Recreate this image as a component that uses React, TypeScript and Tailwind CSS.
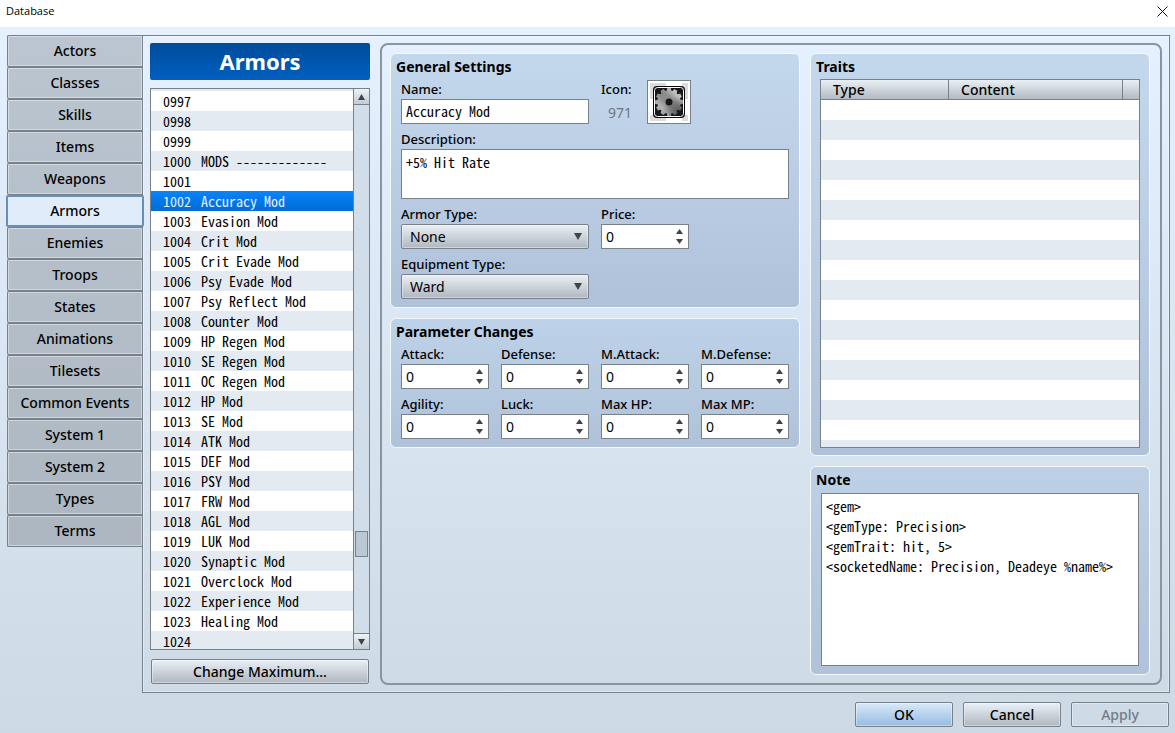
import React, { useState } from 'react';
import type { ReactNode } from 'react';

const tabs = [
  'Actors', 'Classes', 'Skills', 'Items', 'Weapons', 'Armors', 'Enemies', 'Troops',
  'States', 'Animations', 'Tilesets', 'Common Events', 'System 1', 'System 2', 'Types', 'Terms',
];

const armors = [
  { id: '0997', name: '' },
  { id: '0998', name: '' },
  { id: '0999', name: '' },
  { id: '1000', name: 'MODS -------------' },
  { id: '1001', name: '' },
  { id: '1002', name: 'Accuracy Mod' },
  { id: '1003', name: 'Evasion Mod' },
  { id: '1004', name: 'Crit Mod' },
  { id: '1005', name: 'Crit Evade Mod' },
  { id: '1006', name: 'Psy Evade Mod' },
  { id: '1007', name: 'Psy Reflect Mod' },
  { id: '1008', name: 'Counter Mod' },
  { id: '1009', name: 'HP Regen Mod' },
  { id: '1010', name: 'SE Regen Mod' },
  { id: '1011', name: 'OC Regen Mod' },
  { id: '1012', name: 'HP Mod' },
  { id: '1013', name: 'SE Mod' },
  { id: '1014', name: 'ATK Mod' },
  { id: '1015', name: 'DEF Mod' },
  { id: '1016', name: 'PSY Mod' },
  { id: '1017', name: 'FRW Mod' },
  { id: '1018', name: 'AGL Mod' },
  { id: '1019', name: 'LUK Mod' },
  { id: '1020', name: 'Synaptic Mod' },
  { id: '1021', name: 'Overclock Mod' },
  { id: '1022', name: 'Experience Mod' },
  { id: '1023', name: 'Healing Mod' },
  { id: '1024', name: '' },
];

const params = ['Attack', 'Defense', 'M.Attack', 'M.Defense', 'Agility', 'Luck', 'Max HP', 'Max MP'];

const note = `<gem>
<gemType: Precision>
<gemTrait: hit, 5>
<socketedName: Precision, Deadeye %name%>`;

const mono = "font-['Noto_Sans_Mono_CJK_JP','Liberation_Mono',monospace]";

function Arrow({ down = false, className = '' }: { down?: boolean; className?: string }) {
  return (
    <svg viewBox="0 0 8 7" preserveAspectRatio="none" className={className} fill="#3f4449" aria-hidden="true">
      <path d={down ? 'M0 0h8L4 7z' : 'M0 7h8L4 0z'} />
    </svg>
  );
}

function Group({ title, className = '', children }: { title: string; className?: string; children: ReactNode }) {
  return (
    <section className={`flex flex-col rounded-md border border-[#f4f9ff] bg-linear-to-b to-[#afc2d9] ${className}`}>
      <h2 className="h-[25px] pl-[5px] text-sm leading-[26px] font-bold">{title}</h2>
      {children}
    </section>
  );
}

function Label({ htmlFor, children }: { htmlFor: string; children: ReactNode }) {
  return (
    <label htmlFor={htmlFor} className="block h-5 text-[13px] leading-5 font-medium whitespace-nowrap">
      {children}
    </label>
  );
}

function NumberField({ id, label }: { id: string; label: string }) {
  const [value, setValue] = useState(0);

  return (
    <div>
      <Label htmlFor={id}>{label}:</Label>
      <div className="flex h-[25px] border border-[#788088] bg-white">
        <input
          id={id}
          type="number"
          value={value}
          onChange={(e) => setValue(Number(e.target.value))}
          className="w-0 flex-1 [appearance:textfield] pl-1 text-sm outline-none [&::-webkit-inner-spin-button]:appearance-none"
        />
        <div className="flex w-3 flex-col justify-center gap-[5px]">
          <button type="button" aria-label={`${label} up`} onClick={() => setValue(value + 1)}>
            <Arrow className="h-[5px] w-[7px]" />
          </button>
          <button type="button" aria-label={`${label} down`} onClick={() => setValue(Math.max(0, value - 1))}>
            <Arrow down className="h-[5px] w-[7px]" />
          </button>
        </div>
      </div>
    </div>
  );
}

function SelectField({ id, label, options }: { id: string; label: string; options: string[] }) {
  return (
    <div className="col-span-2">
      <Label htmlFor={id}>{label}:</Label>
      <div className="relative">
        <select
          id={id}
          className="block h-[25px] w-full appearance-none rounded-xs border border-[#788088] bg-linear-to-b from-[#e9f0f5] to-[#b0b7c0] pl-2 text-sm inset-shadow-[0_0_0_1px_#ffffff66] outline-none"
        >
          {options.map((o) => (
            <option key={o}>{o}</option>
          ))}
        </select>
        <Arrow down className="pointer-events-none absolute top-[9px] right-[7px] h-[7px] w-2" />
      </div>
    </div>
  );
}

// twelve-tooth cog around (21, 21)
const gearPath =
  Array.from({ length: 12 }, (_, i) =>
    [[-12, 11.5], [-7, 14], [7, 14], [12, 11.5]]
      .map(([deg, r]) => {
        const a = ((i * 30 + deg) * Math.PI) / 180;
        return `${(21 + r * Math.sin(a)).toFixed(2)} ${(21 - r * Math.cos(a)).toFixed(2)}`;
      })
      .join('L')
  ).reduce((d, tooth, i) => d + (i ? 'L' : 'M') + tooth, '') + 'Z';

function GearIcon() {
  return (
    <svg viewBox="0 0 42 42" className="size-[42px]" aria-hidden="true">
      <defs>
        <linearGradient id="steel" x1="0" y1="1" x2="1" y2="0">
          <stop offset="0" stopColor="#7c7c7c" />
          <stop offset="0.25" stopColor="#b4b4b4" />
          <stop offset="0.45" stopColor="#8a8a8a" />
          <stop offset="0.6" stopColor="#8e8e8e" />
          <stop offset="0.78" stopColor="#c4c4c4" />
          <stop offset="1" stopColor="#858585" />
        </linearGradient>
        <radialGradient id="shade" cx="0.85" cy="0.9" r="0.6">
          <stop offset="0" stopColor="#333" stopOpacity="0.6" />
          <stop offset="1" stopColor="#333" stopOpacity="0" />
        </radialGradient>
      </defs>
      <path d="M2 2h16v16H2zM34 2h6v16h-6zM2 34h16v6H2zM34 34h6v6h-6z" fill="#dcdcdc" />
      <rect x="5" y="5" width="32" height="32" rx="4" fill="#0c0c0e" />
      <rect x="6.5" y="6.5" width="29" height="29" rx="3" fill="#17171a" stroke="#fff" />
      <path d={gearPath} fill="url(#steel)" />
      <path d={gearPath} fill="url(#shade)" />
      <circle cx="21" cy="21" r="3.5" fill="#17171a" />
    </svg>
  );
}

const buttonBase = 'h-[25px] rounded-xs border border-[#788088] text-sm font-medium inset-shadow-[0_0_0_1px_#ffffff66]';

function App() {
  const [tab, setTab] = useState('Armors');
  const [selected, setSelected] = useState('1002');

  return (
    <div className="flex h-screen min-h-[620px] min-w-[960px] flex-col bg-white font-['Noto_Sans','Noto_Sans_CJK_JP',sans-serif] text-black">
      <header className="flex h-[27px] shrink-0 items-center justify-between pr-[7px] pb-1 pl-1.5 font-['Open_Sans',sans-serif] text-[11px]">
        <h1>Database</h1>
        <button type="button" aria-label="Close">
          <svg viewBox="0 0 11 11" className="size-[11px]" stroke="#111" fill="none">
            <path d="M.5.5l10 10M10.5.5l-10 10" />
          </svg>
        </button>
      </header>

      <div className="flex min-h-0 flex-1 flex-col bg-linear-to-b from-[#e5f1ff] to-[#cdd9e4] pt-2 pr-[5px] pb-1.5 pl-[7px]">
        <div className="flex min-h-0 flex-1">
          {/* Section tabs */}
          <nav className="flex w-[135px] shrink-0 flex-col">
            {tabs.map((t) => (
              <button
                key={t}
                type="button"
                onClick={() => setTab(t)}
                className={
                  t === tab
                    ? 'z-10 -mr-[2px] -ml-px h-8 rounded-xs border-2 border-[#6a8fb7] bg-[#e1ecfa] text-sm font-medium'
                    : 'h-8 rounded-l-xs border border-r-0 border-[#788088] bg-black/18 text-sm font-medium inset-shadow-[0_0_0_1px_#ffffff66]'
                }
              >
                {t}
              </button>
            ))}
          </nav>

          <main className="flex min-w-0 flex-1 gap-2.5 border border-[#788088] p-[7px] inset-shadow-[0_0_0_1px_#ffffff66]">
            {/* Armor list */}
            <div className="flex w-[220px] shrink-0 flex-col pb-px">
              <h2 className="h-[37px] shrink-0 rounded-xs bg-linear-to-b from-[#004c9b] to-[#005fc0] text-center text-[22px] leading-9 font-bold text-white">
                Armors
              </h2>
              <div className="mt-2 flex min-h-0 flex-1 border border-[#788088] bg-white">
                <ul className={`min-w-0 flex-1 overflow-hidden border-t-2 border-[#e3eaf1] text-sm ${mono}`}>
                  {armors.map((a) => (
                    <li key={a.id} className="h-5 even:bg-[#e3eaf1]">
                      <button
                        type="button"
                        onClick={() => setSelected(a.id)}
                        className={
                          a.id === selected
                            ? 'flex h-5 w-full gap-2.5 bg-linear-to-b from-[#0a83fb] to-[#006cd6] pl-3 text-left leading-5 whitespace-pre text-[#e6f2ff]'
                            : 'flex h-5 w-full gap-2.5 pl-3 text-left leading-5 whitespace-pre'
                        }
                      >
                        <span>{a.id}</span>
                        <span>{a.name}</span>
                      </button>
                    </li>
                  ))}
                </ul>
                <div className="flex w-4 flex-col border-l border-[#788088] bg-[#d1dde8]">
                  <button type="button" aria-label="Scroll up" className="flex h-4 items-center justify-center border-b border-[#788088] bg-linear-to-b from-[#eef3f7] to-[#c3cbd3]">
                    <Arrow className="h-[6px] w-[7px]" />
                  </button>
                  <div className="grow-[426]" />
                  <div className="mx-px h-[26px] border border-[#788088] bg-[#bcc7d4]" />
                  <div className="grow-[76]" />
                  <button type="button" aria-label="Scroll down" className="flex h-4 items-center justify-center border-t border-[#788088] bg-linear-to-b from-[#eef3f7] to-[#c3cbd3]">
                    <Arrow down className="h-[6px] w-[7px]" />
                  </button>
                </div>
              </div>
              <button type="button" className={`mx-px mt-[9px] shrink-0 bg-linear-to-b from-[#e9f0f7] to-[#b0b7c0] ${buttonBase}`}>
                Change Maximum...
              </button>
            </div>

            {/* Editor panel */}
            <div className="grid min-w-0 flex-1 grid-cols-[minmax(0,41fr)_minmax(0,34fr)] gap-2.5 rounded-lg border-2 border-[#8b949f] py-2 pr-2.5 pl-2">
              <div className="flex flex-col gap-2.5">
                <Group title="General Settings" className="from-[#c3d8ec] via-[#bbcde4]">
                  <div className="grid grid-cols-4 gap-x-3 gap-y-[5px] px-2.5 pb-2">
                    <div className="col-span-2">
                      <Label htmlFor="name">Name:</Label>
                      <input
                        id="name"
                        defaultValue="Accuracy Mod"
                        className={`block h-[25px] w-full border border-[#788088] bg-white px-1 pb-0.5 text-sm outline-none ${mono}`}
                      />
                    </div>
                    <div className="col-span-2 flex h-[45px]">
                      <div className="w-[46px]">
                        <Label htmlFor="icon">Icon:</Label>
                        <output htmlFor="icon" className="block pl-[7px] text-sm leading-7 text-[#6e7783]">971</output>
                      </div>
                      <button id="icon" type="button" aria-label="Icon" className="mt-px size-11 border border-[#788088] bg-white">
                        <GearIcon />
                      </button>
                    </div>
                    <div className="col-span-4">
                      <Label htmlFor="description">Description:</Label>
                      <textarea
                        id="description"
                        defaultValue="+5% Hit Rate"
                        className={`block h-[50px] w-full resize-none border border-[#788088] bg-white px-1 py-0.5 text-sm leading-5 outline-none ${mono}`}
                      />
                    </div>
                    <SelectField id="armorType" label="Armor Type" options={['None']} />
                    <NumberField id="price" label="Price" />
                    <SelectField id="equipType" label="Equipment Type" options={['Ward']} />
                  </div>
                </Group>

                <Group title="Parameter Changes" className="from-[#bdd2e8]">
                  <div className="grid grid-cols-4 gap-x-3 gap-y-[5px] px-2.5 pb-2">
                    {params.map((p) => (
                      <NumberField key={p} id={p} label={p} />
                    ))}
                  </div>
                </Group>
              </div>

              <div className="flex min-h-0 flex-col gap-2.5">
                <Group title="Traits" className="min-h-0 flex-[404] from-[#c3d8ec] via-[#bbcde4]">
                  <div className="mx-[9px] mb-[7px] min-h-0 flex-1 border border-[#788088] bg-white bg-[repeating-linear-gradient(#fff_0_20px,#e3eaf1_20px_40px)] bg-position-[0_20px]">
                    <table className="w-full table-fixed border-separate border-spacing-0 text-sm">
                      <thead>
                        <tr className="h-5 bg-linear-to-b from-[#e9f0f5] to-[#b0b7c0] text-left leading-[19px]">
                          <th className="w-32 border-r border-b border-[#788088] py-0 pl-3 font-medium">Type</th>
                          <th className="border-r border-b border-[#788088] py-0 pl-3 font-medium">Content</th>
                          <th className="w-4 border-b border-[#788088] p-0" aria-label="Scroll" />
                        </tr>
                      </thead>
                    </table>
                  </div>
                </Group>
                <Group title="Note" className="min-h-0 flex-[208] from-[#bdd0e5]">
                  <textarea
                    aria-label="Note"
                    defaultValue={note}
                    className={`mx-2.5 mt-px mb-2 block min-h-0 flex-1 resize-none border border-[#788088] bg-white px-1 py-0.5 text-sm leading-5 outline-none ${mono}`}
                  />
                </Group>
              </div>
            </div>
          </main>
        </div>

        <footer className="mt-[9px] flex shrink-0 justify-end gap-2.5 pr-px">
          <button type="button" className={`w-[98px] bg-linear-to-b from-[#d9e9f9] to-[#96bbe0] ${buttonBase}`}>OK</button>
          <button type="button" className={`w-[98px] bg-linear-to-b from-[#e9f0f7] to-[#b0b7c0] ${buttonBase}`}>Cancel</button>
          <button type="button" disabled className={`w-[98px] text-[#747c86] ${buttonBase}`}>Apply</button>
        </footer>
      </div>
    </div>
  );
}

export default App;
